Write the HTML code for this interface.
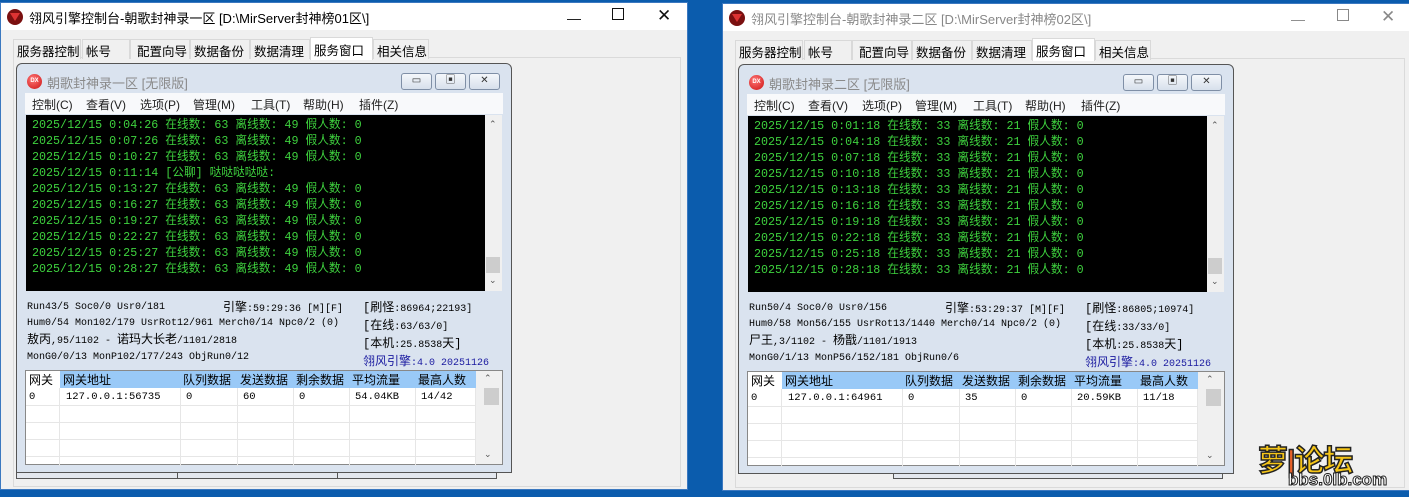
<!DOCTYPE html>
<html><head><meta charset="utf-8"><style>
*{margin:0;padding:0;box-sizing:border-box}
body{width:1409px;height:497px;background:#0b5cad;position:relative;overflow:hidden;font-family:"Liberation Sans","Noto Sans CJK SC",sans-serif;font-size:12px;color:#000}
.win{position:absolute;width:688px;height:488px;background:#f0f0f0;border:1px solid #3b78c0}
.ab{position:absolute}
.tb{left:0;top:0;width:100%;height:27px;background:#fff}
.ico{left:6px;top:6px;width:16px;height:16px;border-radius:50%;background:#7a1010;overflow:hidden}
.ico:after{content:"";position:absolute;left:3px;top:4px;border-left:5px solid transparent;border-right:5px solid transparent;border-top:8px solid #d33}
.ttl{left:28px;top:5px;font-size:13px;white-space:nowrap}
.cap{top:7px;font-size:14px;color:#111}
.tabs{top:36px;left:12px;height:20px}
.tab{position:absolute;top:0;height:20px;border:1px solid #d9d9d9;border-bottom:none;background:#f0f0f0;font-size:12.5px;padding:1px 0 0 3px;white-space:nowrap}
.tab.sel{top:-2px;height:23px;background:#fff;padding-top:2px;z-index:2}
.page{left:12px;top:54px;width:668px;height:430px;background:#f0f0f0;border:1px solid #dadada}
.child{left:15px;top:60px;width:496px;height:410px;background:#dae3ef;border:1px solid #555;border-radius:6px 6px 0 0}
.cico{left:10px;top:10px;width:15px;height:15px;border-radius:50%;background:radial-gradient(circle at 40% 35%,#f77,#c11);font-size:6px;color:#fff;text-align:center;line-height:15px;font-weight:bold}
.ctt{left:30px;top:9px;font-size:13px;color:#8a8a8a;white-space:nowrap}
.cb{top:9px;width:31px;height:17px;border:1px solid #7f8fa6;border-radius:3px;background:linear-gradient(#f4f7fb,#d7e0ec);font-size:10px;text-align:center;line-height:14px;color:#333}
.menu{left:8px;top:29px;width:478px;height:21px;background:#f8f9fb;font-size:12px;color:#222}
.menu span{position:absolute;top:3px;white-space:nowrap}
.con{left:9px;top:51px;width:459px;height:176px;background:#000;font-family:"Liberation Mono","Noto Sans CJK SC",monospace;font-size:11.7px;color:#3ed23e;padding:2px 0 0 6px;line-height:16px;white-space:pre}
.vs{width:17px;background:#f0f0f0}
.arr{position:absolute;left:4px;font-size:9px;color:#555}
.st{font-family:"Liberation Mono","Noto Sans CJK SC",monospace;font-size:10px;white-space:pre;line-height:16px}
.st .c{font-size:12px}
.grid{left:8px;top:306px;width:478px;height:95px;background:#fff;border:1px solid #888}
.gh{position:absolute;top:1px;height:16px;font-size:12px;padding-left:3px;white-space:nowrap;line-height:16px}
.gc{position:absolute;top:18px;font-family:"Liberation Mono",monospace;font-size:10.5px;padding-left:6px;line-height:16px}
.mini{top:463px;height:13px;border:1px solid #555;border-top:none;background:#e4e8ef}
</style></head><body>

<!-- LEFT WINDOW -->
<div class="win" style="left:0;top:2px">
 <div class="ab tb"></div>
 <div class="ab ico"></div>
 <div class="ab ttl">翎风引擎控制台-朝歌封神录一区 [D:\MirServer封神榜01区\]</div>
 <div class="ab cap" style="left:566px">—</div>
 <div class="ab cap" style="left:611px;top:5px;width:12px;height:12px;border:1px solid #111"></div>
 <div class="ab cap" style="left:656px;top:3px;font-size:17px">✕</div>
 <div class="ab page"></div>
 <div class="ab tabs">
  <div class="tab" style="left:0;width:68px">服务器控制</div>
  <div class="tab" style="left:69px;width:48px">帐号</div>
  <div class="tab" style="left:117px;width:60px;padding-left:6px">配置向导</div>
  <div class="tab" style="left:177px;width:60px">数据备份</div>
  <div class="tab" style="left:237px;width:60px">数据清理</div>
  <div class="tab sel" style="left:297px;width:63px">服务窗口</div>
  <div class="tab" style="left:360px;width:56px">相关信息</div>
 </div>
 <div class="ab mini" style="left:15px;width:162px"></div>
 <div class="ab mini" style="left:176px;width:161px"></div>
 <div class="ab mini" style="left:336px;width:160px"></div>
 <div class="ab child">
  <div class="ab cico">DX</div>
  <div class="ab ctt">朝歌封神录一区 [无限版]</div>
  <div class="ab cb" style="left:384px">▭</div>
  <div class="ab cb" style="left:418px">▣</div>
  <div class="ab cb" style="left:452px">✕</div>
  <div class="ab menu"><span style="left:7px">控制(C)</span><span style="left:61px">查看(V)</span><span style="left:115px">选项(P)</span><span style="left:168px">管理(M)</span><span style="left:226px">工具(T)</span><span style="left:278px">帮助(H)</span><span style="left:334px">插件(Z)</span></div>
  <div class="ab con">2025/12/15 0:04:26 在线数: 63 离线数: 49 假人数: 0
2025/12/15 0:07:26 在线数: 63 离线数: 49 假人数: 0
2025/12/15 0:10:27 在线数: 63 离线数: 49 假人数: 0
2025/12/15 0:11:14 [公聊] 哒哒哒哒哒:
2025/12/15 0:13:27 在线数: 63 离线数: 49 假人数: 0
2025/12/15 0:16:27 在线数: 63 离线数: 49 假人数: 0
2025/12/15 0:19:27 在线数: 63 离线数: 49 假人数: 0
2025/12/15 0:22:27 在线数: 63 离线数: 49 假人数: 0
2025/12/15 0:25:27 在线数: 63 离线数: 49 假人数: 0
2025/12/15 0:28:27 在线数: 63 离线数: 49 假人数: 0</div>
  <div class="ab vs" style="left:468px;top:51px;height:176px"><span class="arr" style="top:4px">⌃</span><div class="ab" style="left:1px;top:142px;width:14px;height:16px;background:#cdcdcd"></div><span class="arr" style="top:160px">⌄</span></div>
  <div class="ab st" style="left:10px;top:236px">Run43/5 Soc0/0 Usr0/181
Hum0/54 Mon102/179 UsrRot12/961 Merch0/14 Npc0/2 (0)
<span class="c">敖丙</span>,95/1102 - <span class="c">诺玛大长老</span>/1101/2818
MonG0/0/13 MonP102/177/243 ObjRun0/12</div>
  <div class="ab st" style="left:206px;top:236px"><span class="c">引擎</span>:59:29:36 [M][F]</div>
  <div class="ab st" style="left:346px;top:236px"><span class="c">[刷怪</span>:86964;22193]
<span class="c">[在线</span>:63/63/0]
<span class="c">[本机</span>:25.8538<span class="c">天]</span>
<span style="color:#1a1aa0"><span class="c">翎风引擎</span>:4.0 20251126</span></div>
  <div class="ab grid">
   <div class="ab" style="left:34px;top:0;width:416px;height:17px;background:#99c9f7"></div>
   <div class="gh" style="left:0">网关</div><div class="gh" style="left:34px">网关地址</div><div class="gh" style="left:154px">队列数据</div><div class="gh" style="left:211px">发送数据</div><div class="gh" style="left:267px">剩余数据</div><div class="gh" style="left:323px">平均流量</div><div class="gh" style="left:389px">最高人数</div>
   <div class="ab" style="left:0;top:34px;width:450px;border-top:1px solid #e6e6e6"></div>
   <div class="ab" style="left:0;top:51px;width:450px;border-top:1px solid #e6e6e6"></div>
   <div class="ab" style="left:0;top:68px;width:450px;border-top:1px solid #e6e6e6"></div>
   <div class="ab" style="left:0;top:85px;width:450px;border-top:1px solid #e6e6e6"></div>
   <div class="ab" style="left:33px;top:17px;height:78px;border-left:1px solid #e6e6e6"></div>
   <div class="ab" style="left:154px;top:17px;height:78px;border-left:1px solid #e6e6e6"></div>
   <div class="ab" style="left:211px;top:17px;height:78px;border-left:1px solid #e6e6e6"></div>
   <div class="ab" style="left:267px;top:17px;height:78px;border-left:1px solid #e6e6e6"></div>
   <div class="ab" style="left:323px;top:17px;height:78px;border-left:1px solid #e6e6e6"></div>
   <div class="ab" style="left:389px;top:17px;height:78px;border-left:1px solid #e6e6e6"></div>
   <div class="ab" style="left:449px;top:17px;height:78px;border-left:1px solid #e6e6e6"></div>
   <div class="gc" style="left:-3px">0</div><div class="gc" style="left:34px">127.0.0.1:56735</div><div class="gc" style="left:154px">0</div><div class="gc" style="left:211px">60</div><div class="gc" style="left:267px">0</div><div class="gc" style="left:323px">54.04KB</div><div class="gc" style="left:389px">14/42</div>
   <div class="ab vs" style="left:450px;top:0;height:93px;width:26px"><span class="arr" style="top:2px;left:8px">⌃</span><div class="ab" style="left:8px;top:17px;width:15px;height:17px;background:#cdcdcd"></div><span class="arr" style="top:78px;left:8px">⌄</span></div>
  </div>
 </div>
</div>

<!-- RIGHT WINDOW -->
<div class="win" style="left:722px;top:3px;width:690px">
 <div class="ab tb"></div>
 <div class="ab ico"></div>
 <div class="ab ttl" style="color:#888">翎风引擎控制台-朝歌封神录二区 [D:\MirServer封神榜02区\]</div>
 <div class="ab cap" style="left:568px;color:#888">—</div>
 <div class="ab cap" style="left:614px;top:5px;width:12px;height:12px;border:1px solid #888"></div>
 <div class="ab cap" style="left:658px;top:3px;font-size:17px;color:#888">✕</div>
 <div class="ab page" style="width:670px"></div>
 <div class="ab tabs">
  <div class="tab" style="left:0;width:68px">服务器控制</div>
  <div class="tab" style="left:69px;width:48px">帐号</div>
  <div class="tab" style="left:117px;width:60px;padding-left:6px">配置向导</div>
  <div class="tab" style="left:177px;width:60px">数据备份</div>
  <div class="tab" style="left:237px;width:60px">数据清理</div>
  <div class="tab sel" style="left:297px;width:63px">服务窗口</div>
  <div class="tab" style="left:360px;width:56px">相关信息</div>
 </div>
 <div class="ab mini" style="left:170px;top:462px;width:330px"></div>
 <div class="ab child">
  <div class="ab cico">DX</div>
  <div class="ab ctt">朝歌封神录二区 [无限版]</div>
  <div class="ab cb" style="left:384px">▭</div>
  <div class="ab cb" style="left:418px">▣</div>
  <div class="ab cb" style="left:452px">✕</div>
  <div class="ab menu"><span style="left:7px">控制(C)</span><span style="left:61px">查看(V)</span><span style="left:115px">选项(P)</span><span style="left:168px">管理(M)</span><span style="left:226px">工具(T)</span><span style="left:278px">帮助(H)</span><span style="left:334px">插件(Z)</span></div>
  <div class="ab con">2025/12/15 0:01:18 在线数: 33 离线数: 21 假人数: 0
2025/12/15 0:04:18 在线数: 33 离线数: 21 假人数: 0
2025/12/15 0:07:18 在线数: 33 离线数: 21 假人数: 0
2025/12/15 0:10:18 在线数: 33 离线数: 21 假人数: 0
2025/12/15 0:13:18 在线数: 33 离线数: 21 假人数: 0
2025/12/15 0:16:18 在线数: 33 离线数: 21 假人数: 0
2025/12/15 0:19:18 在线数: 33 离线数: 21 假人数: 0
2025/12/15 0:22:18 在线数: 33 离线数: 21 假人数: 0
2025/12/15 0:25:18 在线数: 33 离线数: 21 假人数: 0
2025/12/15 0:28:18 在线数: 33 离线数: 21 假人数: 0</div>
  <div class="ab vs" style="left:468px;top:51px;height:176px"><span class="arr" style="top:4px">⌃</span><div class="ab" style="left:1px;top:142px;width:14px;height:16px;background:#cdcdcd"></div><span class="arr" style="top:160px">⌄</span></div>
  <div class="ab st" style="left:10px;top:236px">Run50/4 Soc0/0 Usr0/156
Hum0/58 Mon56/155 UsrRot13/1440 Merch0/14 Npc0/2 (0)
<span class="c">尸王</span>,3/1102 - <span class="c">杨戬</span>/1101/1913
MonG0/1/13 MonP56/152/181 ObjRun0/6</div>
  <div class="ab st" style="left:206px;top:236px"><span class="c">引擎</span>:53:29:37 [M][F]</div>
  <div class="ab st" style="left:346px;top:236px"><span class="c">[刷怪</span>:86805;10974]
<span class="c">[在线</span>:33/33/0]
<span class="c">[本机</span>:25.8538<span class="c">天]</span>
<span style="color:#1a1aa0"><span class="c">翎风引擎</span>:4.0 20251126</span></div>
  <div class="ab grid">
   <div class="ab" style="left:34px;top:0;width:416px;height:17px;background:#99c9f7"></div>
   <div class="gh" style="left:0">网关</div><div class="gh" style="left:34px">网关地址</div><div class="gh" style="left:154px">队列数据</div><div class="gh" style="left:211px">发送数据</div><div class="gh" style="left:267px">剩余数据</div><div class="gh" style="left:323px">平均流量</div><div class="gh" style="left:389px">最高人数</div>
   <div class="ab" style="left:0;top:34px;width:450px;border-top:1px solid #e6e6e6"></div>
   <div class="ab" style="left:0;top:51px;width:450px;border-top:1px solid #e6e6e6"></div>
   <div class="ab" style="left:0;top:68px;width:450px;border-top:1px solid #e6e6e6"></div>
   <div class="ab" style="left:0;top:85px;width:450px;border-top:1px solid #e6e6e6"></div>
   <div class="ab" style="left:33px;top:17px;height:78px;border-left:1px solid #e6e6e6"></div>
   <div class="ab" style="left:154px;top:17px;height:78px;border-left:1px solid #e6e6e6"></div>
   <div class="ab" style="left:211px;top:17px;height:78px;border-left:1px solid #e6e6e6"></div>
   <div class="ab" style="left:267px;top:17px;height:78px;border-left:1px solid #e6e6e6"></div>
   <div class="ab" style="left:323px;top:17px;height:78px;border-left:1px solid #e6e6e6"></div>
   <div class="ab" style="left:389px;top:17px;height:78px;border-left:1px solid #e6e6e6"></div>
   <div class="ab" style="left:449px;top:17px;height:78px;border-left:1px solid #e6e6e6"></div>
   <div class="gc" style="left:-3px">0</div><div class="gc" style="left:34px">127.0.0.1:64961</div><div class="gc" style="left:154px">0</div><div class="gc" style="left:211px">35</div><div class="gc" style="left:267px">0</div><div class="gc" style="left:323px">20.59KB</div><div class="gc" style="left:389px">11/18</div>
   <div class="ab vs" style="left:450px;top:0;height:93px;width:26px"><span class="arr" style="top:2px;left:8px">⌃</span><div class="ab" style="left:8px;top:17px;width:15px;height:17px;background:#cdcdcd"></div><span class="arr" style="top:78px;left:8px">⌄</span></div>
  </div>
 </div>
</div>

<!-- watermark -->
<div class="ab" style="left:1258px;top:436px;font-size:30px;font-weight:bold;color:#f5c518;-webkit-text-stroke:1.5px #222;white-space:nowrap;letter-spacing:-1px">萝<span style="color:#e8622a">|</span>论坛</div>
<div class="ab" style="left:1288px;top:470px;font-size:17px;font-weight:bold;color:#fff;-webkit-text-stroke:1px #222;white-space:nowrap">bbs.0lb.com</div>
</body></html>
